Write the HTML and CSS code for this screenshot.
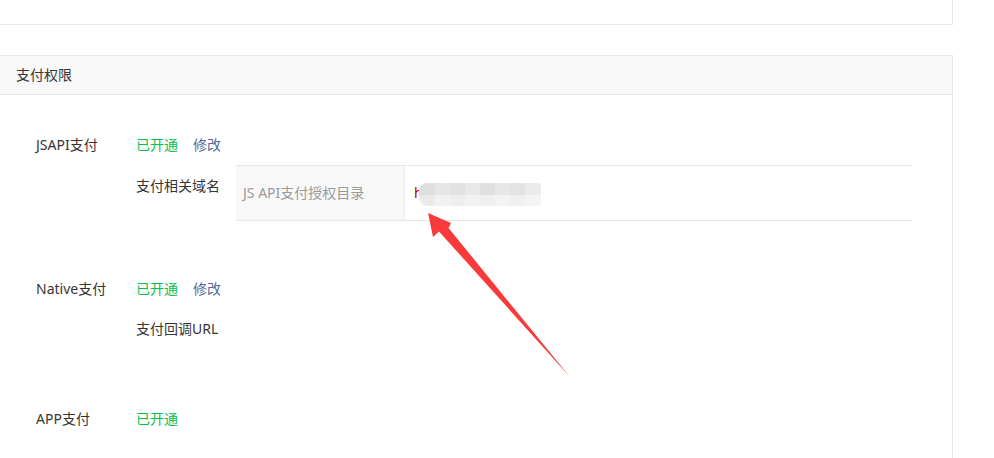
FILE: index.html
```html
<!DOCTYPE html>
<html lang="zh-CN">
<head>
<meta charset="utf-8">
<title>支付权限</title>
<link rel="stylesheet" href="styles.css">
</head>
<body>
<div class="page">
  <div class="card card-top"></div>
  <div class="card card-perm">
    <div class="card-head">支付权限</div>
    <div class="card-body">
      <div class="perm perm-jsapi">
        <div class="perm-row">
          <span class="perm-name">JSAPI支付</span>
          <span class="status">已开通</span>
          <a class="edit">修改</a>
        </div>
        <div class="perm-sub">
          <span class="sub-label">支付相关域名</span>
          <div class="domain-table">
            <div class="dt-label">JS API支付授权目录</div>
            <div class="dt-value">
              <span class="url">h</span>
              <span class="mosaic"></span>
            </div>
          </div>
        </div>
      </div>
      <div class="perm perm-native">
        <div class="perm-row">
          <span class="perm-name">Native支付</span>
          <span class="status">已开通</span>
          <a class="edit">修改</a>
        </div>
        <div class="perm-sub">
          <span class="sub-label">支付回调URL</span>
        </div>
      </div>
      <div class="perm perm-app">
        <div class="perm-row">
          <span class="perm-name">APP支付</span>
          <span class="status">已开通</span>
        </div>
      </div>
    </div>
  </div>
  <svg class="arrow" width="994" height="458" viewBox="0 0 994 458" aria-hidden="true">
    <polygon points="428,213 451,223 448.5,228 570,377 439,231.5 433,237" fill="#f83a3a"/>
  </svg>
</div>
</body>
</html>
```
FILE: styles.css
```css
html, body {
  margin: 0;
  padding: 0;
  background: #fff;
}
body {
  font-family: "Noto Sans", "Noto Sans CJK SC", sans-serif;
  font-size: 14px;
  color: #353535;
  overflow: hidden;
}
.page {
  position: relative;
  width: 994px;
  height: 458px;
  overflow: hidden;
}
.card {
  width: 952px;
  border: 1px solid #e7e7eb;
  border-left: none;
  background: #fff;
}
.card-top {
  height: 24px;
  border-top: none;
}
.card-perm {
  margin-top: 30px;
  height: 460px;
}
.card-head {
  height: 38px;
  line-height: 38px;
  padding-left: 16px;
  background: #f8f8f8;
  border-bottom: 1px solid #e7e7eb;
}
.card-body {
  padding: 40px 40px 0 36px;
}
.perm-row {
  display: flex;
  align-items: center;
  line-height: 20px;
}
.perm-name {
  width: 100px;
}
.status {
  color: #07c04e;
}
.edit {
  margin-left: 15px;
  color: #576b95;
  cursor: pointer;
}
.perm-sub {
  display: flex;
  align-items: flex-start;
  padding-left: 100px;
  margin-top: 10px;
}
.sub-label {
  width: 100px;
  flex: none;
  line-height: 20px;
  padding-top: 10px;
}
.perm-jsapi .sub-label {
  padding-top: 11px;
}
.domain-table {
  flex: 1;
  display: flex;
  height: 54px;
  border-top: 1px solid #e7e7eb;
  border-bottom: 1px solid #e7e7eb;
}
.dt-label {
  width: 161px;
  padding-left: 7px;
  background: #f8f8f8;
  border-right: 1px solid #ececec;
  color: #9a9a9a;
  line-height: 54px;
}
.dt-value {
  position: relative;
  flex: 1;
  padding-left: 9px;
  line-height: 54px;
}
.url {
  color: #b00000;
}
.mosaic {
  position: absolute;
  left: 14px;
  top: 17px;
  width: 122px;
  height: 23px;
  border-radius: 8px 4px 2px 9px;
  background:
    linear-gradient(90deg,
      #dedede 0 16px, #e6e6e6 16px 31px, #e2e2e2 31px 46px, #e8e8e8 46px 61px,
      #dfe0df 61px 76px, #e7e7e7 76px 91px, #e3e3e3 91px 106px, #ebebeb 106px 122px) top / 100% 12px no-repeat,
    linear-gradient(90deg,
      #eaeaea 0 16px, #f1f1f1 16px 31px, #eeeeee 31px 46px, #f2f2f2 46px 61px,
      #efefef 61px 76px, #f3f3f3 76px 91px, #f0f0f0 91px 106px, #f4f4f4 106px 122px) bottom / 100% 11px no-repeat;
}
.perm-native {
  margin-top: 58px;
}
.perm-app {
  margin-top: 70px;
}
.arrow {
  position: absolute;
  left: 0;
  top: 0;
  pointer-events: none;
}
```
